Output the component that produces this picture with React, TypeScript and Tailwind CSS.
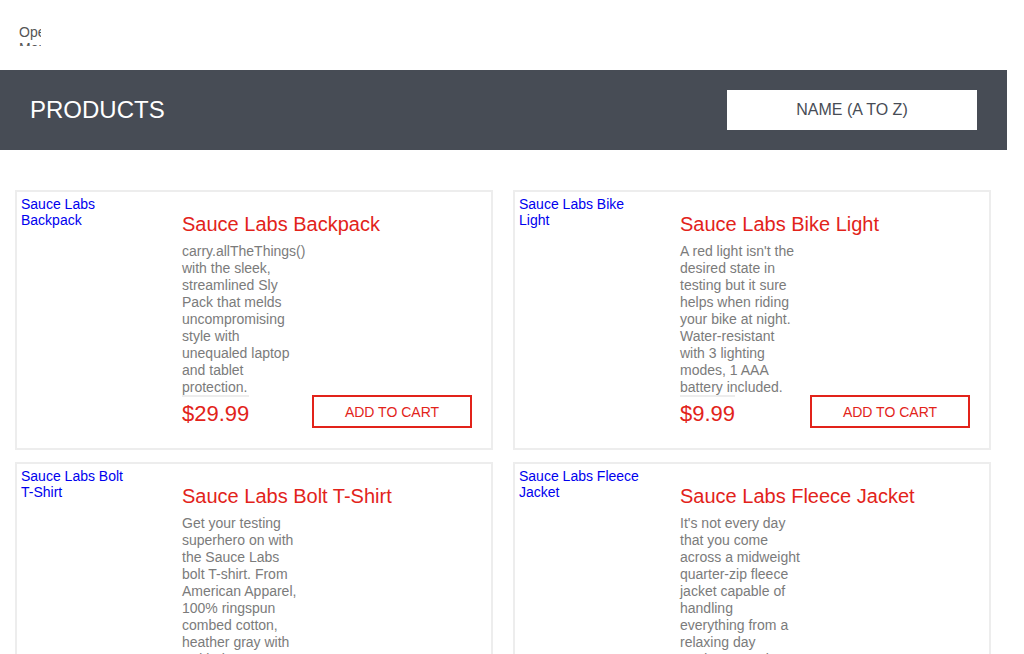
import React from "react";

type Item = { name: string; desc: string; price: string };

const items: Item[] = [
  {
    name: "Sauce Labs Backpack",
    desc: "carry.allTheThings() with the sleek, streamlined Sly Pack that melds uncompromising style with unequaled laptop and tablet protection.",
    price: "$29.99",
  },
  {
    name: "Sauce Labs Bike Light",
    desc: "A red light isn't the desired state in testing but it sure helps when riding your bike at night. Water-resistant with 3 lighting modes, 1 AAA battery included.",
    price: "$9.99",
  },
  {
    name: "Sauce Labs Bolt T-Shirt",
    desc: "Get your testing superhero on with the Sauce Labs bolt T-shirt. From American Apparel, 100% ringspun combed cotton, heather gray with red bolt.",
    price: "$15.99",
  },
  {
    name: "Sauce Labs Fleece Jacket",
    desc: "It's not every day that you come across a midweight quarter-zip fleece jacket capable of handling everything from a relaxing day outdoors to a busy day at the office.",
    price: "$49.99",
  },
];

function Words({ text }: { text: string }) {
  const words = text.split(" ");
  return (
    <>
      {words.map((w, i) => (
        <React.Fragment key={i}>
          <span className="whitespace-nowrap">{w}</span>
          {i < words.length - 1 ? " " : null}
        </React.Fragment>
      ))}
    </>
  );
}

function Card({ item }: { item: Item }) {
  return (
    <div className="flex border-2 border-[#ededed] bg-white">
      <div className="w-[165px] shrink-0 pl-[4px] pt-[4px]">
        <a href="#" className="block w-[130px] text-[14px] leading-[16px] text-[#0000ee]">
          <Words text={item.name} />
        </a>
      </div>
      <div className="flex flex-1 flex-col pr-[19px] pb-[20px]">
        <div className="mt-[20px] text-[20px] leading-[24px] text-[#e2231a]">{item.name}</div>
        <div className="mt-[7px] w-[120.5px] text-[14px] leading-[17px] text-[#7b7b7b]">
          <Words text={item.desc} />
        </div>
        <div className="-mt-[1px] flex items-start justify-between">
          <div className="border-t-2 border-[#ededed] pt-[5px] text-[22px] leading-[24px] text-[#e2231a]">
            {item.price}
          </div>
          <button className="flex h-[33px] w-[160px] items-center justify-center border-2 border-[#e2231a] bg-white text-[14px] leading-[16px] text-[#e2231a]">
            ADD TO CART
          </button>
        </div>
      </div>
    </div>
  );
}

export default function App() {
  return (
    <div
      className="w-[1007px] bg-white"
      style={{ fontFamily: '"Liberation Sans", Arial, sans-serif' }}
    >
      <div className="h-[70px] pl-[19px] pt-[24px]">
        <div className="h-[22px] w-[22px] overflow-hidden text-[14px] leading-[16px] text-[#555]">
          Open Menu
        </div>
      </div>
      <div className="flex h-[80px] items-center justify-between bg-[#474c55] px-[30px]">
        <div className="text-[24px] leading-[24px] text-white">PRODUCTS</div>
        <div className="flex h-[40px] w-[250px] items-center justify-center bg-white text-[16px] leading-[18px] text-[#474c55]">
          NAME (A TO Z)
        </div>
      </div>
      <div className="grid grid-cols-2 gap-x-[20px] gap-y-[12px] pl-[15px] pr-[16px] pt-[40px]">
        {items.map((it) => (
          <Card key={it.name} item={it} />
        ))}
      </div>
    </div>
  );
}
